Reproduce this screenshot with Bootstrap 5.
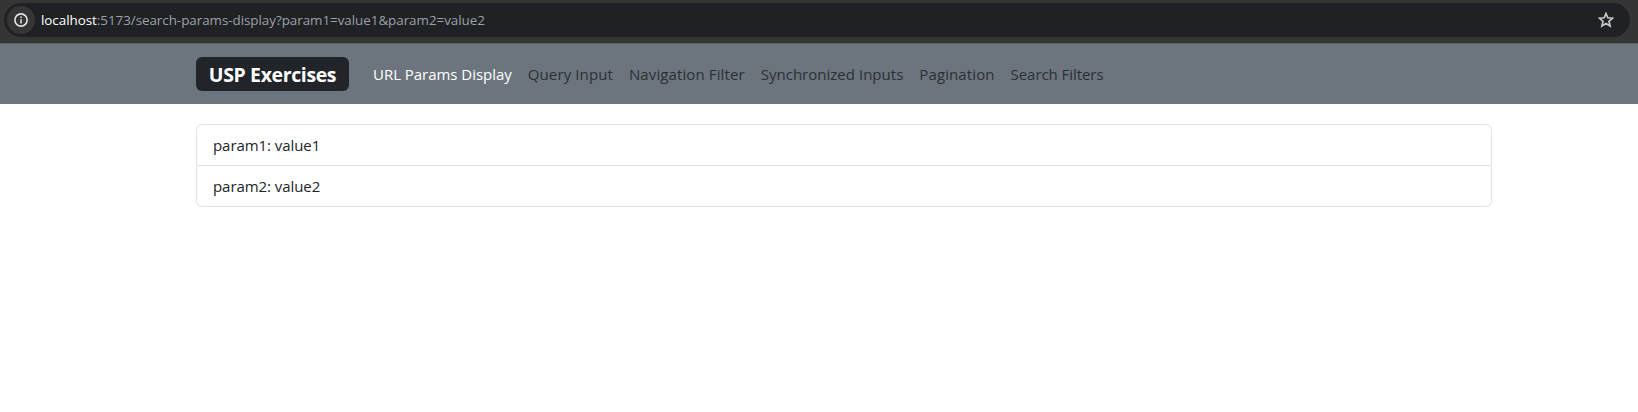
<!DOCTYPE html>
<html lang="en">
<head>
<meta charset="utf-8">
<meta name="viewport" content="width=device-width, initial-scale=1">
<title>USP Exercises</title>
<link href="https://cdn.jsdelivr.net/npm/bootstrap@5.3.0/dist/css/bootstrap.min.css" rel="stylesheet">
<style>
body { font-family: "Open Sans", "Noto Sans", sans-serif; font-size: 15px; line-height: 24px; overflow: hidden; }
.browser-bar { height: 44px; background: #353535; padding: 3px 8px 6px 4px; border-bottom: 1px solid #5d5f62; }
.address { height: 34px; border-radius: 17px; background: #202124; padding: 0 16px 0 3px; font-size: 13.4px; color: #9aa0a6; }
.site-info { width: 28px; height: 28px; border-radius: 50%; background: #353535; margin-right: 6px; }
.url-text { letter-spacing: -.035px; }
.page-inner { width: 1320px; margin-left: 184px; }
.site-nav { height: 60px; padding: 0; }
.brand-tag { width: 153px; height: 34px; font-size: 19.5px; font-weight: 700; line-height: 36px; letter-spacing: -.38px; border-radius: 6px; margin-right: 16px; color: #fff; text-align: center; }
.site-nav .nav-link { letter-spacing: .02px; color: #2b3035; padding: 8px; white-space: nowrap; }
.site-nav .nav-link.active { color: #fff; letter-spacing: -.03px; }
.site-nav .spaced { letter-spacing: .11px; }
.site-nav .snug { letter-spacing: -.06px; }
.params { margin-top: 20px; }
.params .list-group-item { color: #212529; letter-spacing: -.06px; border-color: #dee2e6; }
</style>
</head>
<body>
<div class="browser-bar">
  <div class="address d-flex align-items-center">
    <span class="site-info d-flex align-items-center justify-content-center">
      <svg width="14" height="14" viewBox="0 0 14 14" fill="none" stroke="#e3e3e3"><circle cx="7" cy="7" r="6.1" stroke-width="1.6"/><path d="M7 6.2v4.2M7 3.5v1.6" stroke-width="1.5"/></svg>
    </span>
    <span class="url-text"><span class="text-white">localhost</span>:5173/search-params-display?param1=value1&amp;param2=value2</span>
    <svg class="ms-auto" width="16" height="16" viewBox="0 0 16 16" fill="none" stroke="#c7c7c7" stroke-width="1.7"><path d="M8 1.5 9.8 5.8l4.8.4-3.6 3.1 1.1 4.7L8 11.5 3.9 14 5 9.3 1.4 6.2l4.8-.4z"/></svg>
  </div>
</div>
<nav class="navbar navbar-expand site-nav bg-secondary">
  <div class="container-fluid page-inner justify-content-start">
    <a class="brand-tag bg-dark text-decoration-none" href="#">USP Exercises</a>
    <div class="navbar-nav">
      <a class="nav-link active" href="#">URL Params Display</a>
      <a class="nav-link spaced" href="#">Query Input</a>
      <a class="nav-link spaced" href="#">Navigation Filter</a>
      <a class="nav-link" href="#">Synchronized Inputs</a>
      <a class="nav-link spaced" href="#">Pagination</a>
      <a class="nav-link snug" href="#">Search Filters</a>
    </div>
  </div>
</nav>
<main class="container-fluid page-inner">
  <ul class="list-group params">
    <li class="list-group-item">param1: value1</li>
    <li class="list-group-item">param2: value2</li>
  </ul>
</main>
</body>
</html>
